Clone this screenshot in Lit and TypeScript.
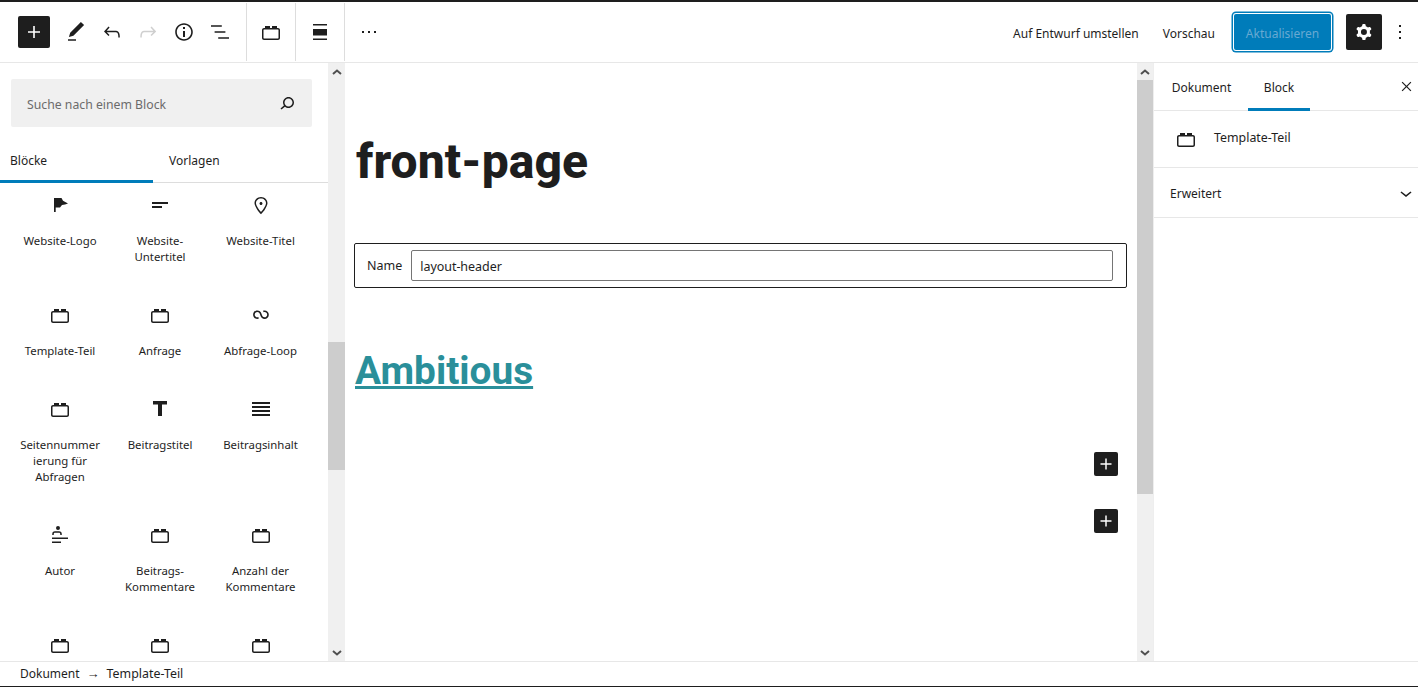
import { LitElement, html, css, svg } from "lit";
import { customElement } from "lit/decorators.js";

const P: Record<string, string> = {
  plus: "M18 11.2h-5.2V6h-1.6v5.2H6v1.6h5.2V18h1.6v-5.2H18z",
  pencil: "M20.1 5.1L16.9 2 6.2 12.7l-1.3 4.4 4.5-1.3L20.1 5.1zM4 20.8h8v-1.5H4v1.5z",
  undo: "M18.3 11.7c-.6-.6-1.4-.9-2.3-.9H6.7l2.9-3.3-1.1-1-4.5 5L8.5 16l1-1-2.7-2.7H16c.5 0 .9.2 1.3.5 1 1 1 3.4 1 4.5v.3h1.5v-.2c0-1.5 0-4.3-1.5-5.7z",
  redo: "M15.6 6.5l-1.1 1 2.9 3.3H8c-.9 0-1.7.3-2.3.9-1.4 1.5-1.4 4.2-1.4 5.6v.2h1.5v-.3c0-1.1 0-3.5 1-4.5.3-.3.7-.5 1.3-.5h9.2L14.5 15l1.1 1.1 4.6-4.6-4.6-5z",
  info: "M12 3.2c-4.8 0-8.8 3.9-8.8 8.8 0 4.8 3.9 8.8 8.8 8.8 4.8 0 8.8-3.9 8.8-8.8 0-4.8-4-8.8-8.8-8.8zm0 16c-4 0-7.2-3.3-7.2-7.2C4.8 8 8 4.8 12 4.8s7.2 3.3 7.2 7.2c0 4-3.2 7.2-7.2 7.2zM11 17h2v-6h-2v6zm0-8h2V7h-2v2z",
  list: "M13.8 5.2H3v1.5h10.8V5.2zm-3.6 12v1.5H21v-1.5H10.2zm7.2-6H6.6v1.5h10.8v-1.5z",
  block: "M19 8h-1V6h-5v2h-2V6H6v2H5c-1.1 0-2 .9-2 2v8c0 1.1.9 2 2 2h14c1.1 0 2-.9 2-2v-8c0-1.1-.9-2-2-2zm.5 10c0 .3-.2.5-.5.5H5c-.3 0-.5-.2-.5-.5v-8c0-.3.2-.5.5-.5h14c.3 0 .5.2.5.5v8z",
  wide: "M5 5.5h14V4H5zM5 20h14v-1.5H5zM5 9h14v6.5H5z",
  dots: "M11 13h2v-2h-2v2zm-6 0h2v-2H5v2zm12-2v2h2v-2h-2z",
  vdots: "M13 19h-2v-2h2v2zm0-6h-2v-2h2v2zm0-6h-2V5h2v2z",
  cog: "M10.289 4.836A1 1 0 0111.275 4h1.306a1 1 0 01.987.836l.244 1.466c.787.26 1.503.679 2.108 1.218l1.393-.522a1 1 0 011.216.437l.653 1.13a1 1 0 01-.23 1.273l-1.148.944a6.025 6.025 0 010 2.435l1.149.946a1 1 0 01.23 1.272l-.653 1.13a1 1 0 01-1.216.437l-1.394-.522c-.605.54-1.32.958-2.108 1.218l-.244 1.466a1 1 0 01-.987.836h-1.306a1 1 0 01-.986-.836l-.244-1.466a5.995 5.995 0 01-2.108-1.218l-1.394.522a1 1 0 01-1.217-.436l-.653-1.131a1 1 0 01.23-1.272l1.149-.946a6.026 6.026 0 010-2.435l-1.148-.944a1 1 0 01-.23-1.272l.653-1.131a1 1 0 011.217-.437l1.393.522a5.994 5.994 0 012.108-1.218l.244-1.466zM14.929 12a3 3 0 11-6 0 3 3 0 016 0z",
  search: "M13.5 6C10.5 6 8 8.5 8 11.5c0 1.1.3 2.1.9 3l-3.4 3 1 1.1 3.4-2.9c1 .9 2.2 1.4 3.6 1.4 3 0 5.5-2.5 5.5-5.5C19 8.5 16.5 6 13.5 6zm0 9.5c-2.2 0-4-1.8-4-4s1.8-4 4-4 4 1.8 4 4-1.8 4-4 4z",
  close: "M6.4 5.2L12 10.8l5.6-5.6 1.2 1.2L13.2 12l5.6 5.6-1.2 1.2L12 13.2l-5.6 5.6-1.2-1.2 5.6-5.6-5.6-5.6z",
  chevron: "M17.5 11.6L12 16l-5.5-4.4.9-1.2L12 14l4.5-3.6 1 1.2z",
  flag: "M6 5h1.7v14H6zM7.7 5h5.8l1.5 2.8 5 2.7-3 1-3 .6-2 2.4H7.7z",
  tagline: "M4 11h16V9H4v2zM4 15h10v-2H4v2z",
  pin: "M12 9c-.8 0-1.5.7-1.5 1.5S11.2 12 12 12s1.5-.7 1.5-1.5S12.8 9 12 9zm0-5c-3.6 0-6.5 2.8-6.5 6.2 0 .8.3 1.8.9 3.1.5 1.1 1.2 2.3 2 3.6.7 1 3 3.8 3.2 3.9l.4.5.4-.5c.2-.2 2.6-2.9 3.2-3.9.8-1.2 1.5-2.5 2-3.6.6-1.3.9-2.3.9-3.1C18.5 6.8 15.6 4 12 4zm4.3 8.7c-.5 1-1.1 2.2-1.9 3.4-.5.7-1.7 2.2-2.4 3-.7-.8-1.9-2.3-2.4-3-.8-1.2-1.4-2.3-1.9-3.3-.6-1.4-.7-2.2-.7-2.5 0-2.6 2.2-4.7 5-4.7s5 2.1 5 4.7c0 .2-.1 1-.7 2.4z",
  loop: "M18.1823 11.6392C18.1823 13.0804 17.0139 14.2487 15.5727 14.2487C14.3579 14.2487 13.335 13.4179 13.0453 12.2922L13.0377 12.2625L13.0278 12.2335L12.3985 10.377L12.3942 10.3785C11.8571 8.64997 10.246 7.39405 8.33961 7.39405C5.99509 7.39405 4.09448 9.29465 4.09448 11.6392C4.09448 13.9837 5.99509 15.8843 8.33961 15.8843C8.88499 15.8843 9.40822 15.781 9.88943 15.5923L9.29212 14.0697C8.99812 14.185 8.67729 14.2487 8.33961 14.2487C6.89838 14.2487 5.73003 13.0804 5.73003 11.6392C5.73003 10.1979 6.89838 9.02959 8.33961 9.02959C9.55444 9.02959 10.5773 9.86046 10.867 10.9862L10.8772 10.9836L11.4695 12.7311C11.9515 14.546 13.6048 15.8843 15.5727 15.8843C17.9172 15.8843 19.8178 13.9837 19.8178 11.6392C19.8178 9.29465 17.9172 7.39404 15.5727 7.39404C15.0287 7.39404 14.5066 7.4968 14.0264 7.6847L14.6223 9.20781C14.9158 9.093 15.2358 9.02959 15.5727 9.02959C17.0139 9.02959 18.1823 10.1979 18.1823 11.6392Z",
  title: "M5 4v3.5h5V19h4V7.5h5V4z",
  content: "M3 5h18v2H3zM3 9h18v2H3zM3 13h18v2H3zM3 17h18v2H3z",
  author: "M12 5a2 2 0 11-4 0 2 2 0 014 0zM13.75 12v-1A2.75 2.75 0 0011 8.25H7A2.75 2.75 0 004.25 11v1h1.5v-1c0-.69.56-1.25 1.25-1.25h4c.69 0 1.25.56 1.25 1.25v1h1.5zM4 20h9v-1.5H4V20zm16-4H4v-1.5h16V16z",
};

const icon = (name: string, cls = "") =>
  html`<svg class="ic ${cls}" viewBox="0 0 24 24" width="24" height="24" fill="currentColor" fill-rule="evenodd">${svg`<path d=${P[name]}></path>`}</svg>`;

const BLOCKS: { i: string; l: string[]; r: string }[] = [
  { i: "flag", l: ["Website-Logo"], r: "two" },
  { i: "tagline", l: ["Website-", "Untertitel"], r: "two" },
  { i: "pin", l: ["Website-Titel"], r: "two" },
  { i: "block", l: ["Template-Teil"], r: "one" },
  { i: "block", l: ["Anfrage"], r: "one" },
  { i: "loop", l: ["Abfrage-Loop"], r: "one" },
  { i: "block", l: ["Seitennummer", "ierung für", "Abfragen"], r: "three" },
  { i: "title", l: ["Beitragstitel"], r: "three" },
  { i: "content", l: ["Beitragsinhalt"], r: "three" },
  { i: "author", l: ["Autor"], r: "two" },
  { i: "block", l: ["Beitrags-", "Kommentare"], r: "two" },
  { i: "block", l: ["Anzahl der", "Kommentare"], r: "two" },
  { i: "block", l: [""], r: "two" },
  { i: "block", l: [""], r: "two" },
  { i: "block", l: [""], r: "two" },
];

const up = html`<div class="sb-btn"><svg viewBox="0 0 10 6" width="10" height="6"><path d="M1 5l4-3.5L9 5" fill="none" stroke="#505050" stroke-width="2"></path></svg></div>`;
const down = html`<div class="sb-btn"><svg viewBox="0 0 10 6" width="10" height="6"><path d="M1 1l4 3.5L9 1" fill="none" stroke="#505050" stroke-width="2"></path></svg></div>`;

@customElement("app-root")
export class AppRoot extends LitElement {
  static styles = css`
    :host {
      display: flex;
      flex-direction: column;
      width: 1418px;
      height: 687px;
      overflow: hidden;
      background: #fff;
      color: #1e1e1e;
      font: 12px/16px "Noto Sans", sans-serif;
      border-top: 2px solid #1e1e1e;
      border-bottom: 1px solid #1e1e1e;
      box-sizing: border-box;
    }
    .ic { display: block; flex: none; }
    .top {
      height: 61px;
      flex: none;
      display: flex;
      align-items: center;
      border-bottom: 1px solid #e7e7e7;
      box-sizing: border-box;
    }
    .top-left { display: flex; align-items: center; height: 100%; padding-left: 18px; }
    .add {
      width: 32px; height: 32px; background: #1e1e1e; color: #fff; border-radius: 2px;
      display: flex; align-items: center; justify-content: center; margin-right: 8px;
    }
    .tool { width: 36px; height: 36px; display: flex; align-items: center; justify-content: center; }
    .tool.off { color: #cfcfcf; }
    .tools { display: flex; align-items: center; margin-right: 8px; }
    .group {
      height: 58px; width: 49px; border-left: 1px solid #ddd; box-sizing: border-box;
      display: flex; align-items: center; justify-content: center;
    }
    .top-right { margin-left: auto; display: flex; align-items: center; height: 100%; }
    .link { margin-right: 24px; padding-top: 3px; }
    .link.last { margin-right: 18px; }
    .save {
      width: 99px; height: 38px; margin-right: 14px; background: #007cba; color: #67a9d2;
      border-radius: 3px; display: flex; align-items: center; justify-content: center;
      box-shadow: inset 0 0 0 1px #fff, 0 0 0 1.5px #007cba; padding-top: 3px; box-sizing: border-box;
    }
    .cog {
      width: 36px; height: 36px; background: #1e1e1e; color: #fff; border-radius: 2px;
      display: flex; align-items: center; justify-content: center;
    }
    .vd { width: 36px; display: flex; justify-content: center; }
    .main { flex: 1; display: flex; min-height: 0; }

    .inserter { width: 328px; flex: none; display: flex; flex-direction: column; min-height: 0; }
    .search {
      margin: 16px 16px 0 11px; height: 48px; background: #f0f0f0; border-radius: 2px; flex: none;
      display: flex; align-items: center; justify-content: space-between;
      padding: 0 13px 0 16px; color: #6b6b6b; font-size: 12.25px;
    }
    .search span { padding-top: 3px; }
    .search .ic { color: #1e1e1e; }
    .itabs { display: flex; height: 56px; flex: none; border-bottom: 1px solid #ddd; box-sizing: border-box; }
    .itab { width: 153px; box-sizing: border-box; display: flex; align-items: center; padding: 12px 0 0 10px; }
    .itab.on { border-bottom: 3px solid #007cba; margin-bottom: -1px; padding-top: 15px; }
    .itab.second { padding-left: 16px; }
    .blocks {
      flex: 1; min-height: 0; overflow: hidden;
      display: grid; grid-template-columns: 100px 100px 101px; padding: 10px 0 0 10px; align-content: start;
    }
    .b { display: flex; flex-direction: column; align-items: center; text-align: center; font-size: 11.4px; }
    .b.one { height: 94px; }
    .b.two { height: 110px; }
    .b.three { height: 126px; }
    .b .lb { margin-top: 16px; height: 16px; white-space: nowrap; }
    .b .lb + .lb { margin-top: 0; }

    .sb { width: 17px; flex: none; background: #f0f0f0; display: flex; flex-direction: column; }
    .sb.c { width: 16px; }
    .sb-btn { height: 17px; flex: none; display: flex; align-items: center; justify-content: center; }
    .gap-l { height: 262px; flex: none; }
    .thumb { background: #cdcdcd; flex: none; }
    .thumb.l { height: 128px; }
    .thumb.r { height: 414px; }
    .fill { flex: 1; }

    .canvas { flex: 1; min-width: 0; display: flex; flex-direction: column; padding: 0 10px 0 9px; }
    .h1 {
      margin: 68px 0 0 2px; font: 800 48px/62px "Roboto", sans-serif; letter-spacing: 0.1px; color: #1e1e1e;
    }
    .tp {
      margin-top: 50px; height: 45px; border: 1px solid #1e1e1e; border-radius: 2px; box-sizing: border-box;
      display: flex; align-items: center; padding: 0 13px 0 12px; gap: 9px; font-size: 12.5px;
    }
    .tp span { padding-top: 1px; }
    .input {
      flex: 1; height: 31px; border: 1px solid #757575; border-radius: 2px; box-sizing: border-box;
      display: flex; align-items: center; padding: 2px 0 0 8px; letter-spacing: -0.05px;
    }
    .site {
      margin: 56px 0 0 1px; font: 700 38.8px/54px "Roboto", sans-serif; color: #2a8f9a; text-decoration: underline;
      text-decoration-thickness: 3px; align-self: flex-start;
    }
    .appender {
      width: 24px; height: 24px; background: #1e1e1e; color: #fff; border-radius: 2px; align-self: flex-end;
      margin-right: 9px; margin-top: 33px; display: flex; align-items: center; justify-content: center;
    }
    .appender.first { margin-top: 54px; }
    .appender .ic { width: 22px; height: 22px; }

    .side { width: 265px; flex: none; border-left: 1px solid #eee; box-sizing: border-box; display: flex; flex-direction: column; }
    .stabs { height: 48px; flex: none; display: flex; border-bottom: 1px solid #e7e7e7; box-sizing: border-box; }
    .stab { display: flex; align-items: center; justify-content: center; padding-top: 3px; box-sizing: border-box; }
    .stab.doc { width: 94px; padding-left: 1px; }
    .stab.blk { width: 62px; border-bottom: 3px solid #007cba; margin-bottom: -1px; padding-top: 5px; }
    .x { margin-left: auto; width: 24px; display: flex; align-items: center; }
    .x .ic { width: 17px; height: 17px; margin-left: 3.5px; }
    .card {
      height: 57px; flex: none; border-bottom: 1px solid #e7e7e7; box-sizing: border-box;
      display: flex; padding: 16px 0 0 20px; gap: 16px; font-size: 12.4px;
    }
    .card span { margin-top: 3px; }
    .adv {
      height: 50px; flex: none; border-bottom: 1px solid #e7e7e7; box-sizing: border-box;
      display: flex; align-items: center; justify-content: space-between; padding: 0 0 0 16px;
    }
    .adv span { padding-top: 2px; }
    .crumb {
      height: 25px; flex: none; border-top: 1px solid #e7e7e7; box-sizing: border-box;
      display: flex; align-items: center; padding-left: 20px; gap: 7px;
    }
    .crumb .t { font-size: 12.4px; }
    .crumb .a { font-family: "Liberation Sans", sans-serif; font-size: 13px; }
  `;

  render() {
    return html`
      <div class="top">
        <div class="top-left">
          <div class="add">${icon("plus")}</div>
          <div class="tools">
            <div class="tool">${icon("pencil")}</div>
            <div class="tool">${icon("undo")}</div>
            <div class="tool off">${icon("redo")}</div>
            <div class="tool">${icon("info")}</div>
            <div class="tool">${icon("list")}</div>
          </div>
          <div class="group">${icon("block")}</div>
          <div class="group">${icon("wide")}</div>
          <div class="group">${icon("dots")}</div>
        </div>
        <div class="top-right">
          <span class="link">Auf Entwurf umstellen</span>
          <span class="link last">Vorschau</span>
          <div class="save">Aktualisieren</div>
          <div class="cog">${icon("cog")}</div>
          <div class="vd">${icon("vdots")}</div>
        </div>
      </div>
      <div class="main">
        <div class="inserter">
          <div class="search"><span>Suche nach einem Block</span>${icon("search")}</div>
          <div class="itabs">
            <div class="itab on">Blöcke</div>
            <div class="itab second">Vorlagen</div>
          </div>
          <div class="blocks">
            ${BLOCKS.map(
              (b) => html`<div class="b ${b.r}">${icon(b.i)}${b.l.map((t) => html`<div class="lb">${t}</div>`)}</div>`
            )}
          </div>
        </div>
        <div class="sb">${up}<div class="gap-l"></div><div class="thumb l"></div><div class="fill"></div>${down}</div>
        <div class="canvas">
          <div class="h1">front-page</div>
          <div class="tp"><span>Name</span><div class="input">layout-header</div></div>
          <div class="site">Ambitious</div>
          <div class="appender first">${icon("plus")}</div>
          <div class="appender">${icon("plus")}</div>
        </div>
        <div class="sb c">${up}<div class="thumb r"></div><div class="fill"></div>${down}</div>
        <div class="side">
          <div class="stabs">
            <div class="stab doc">Dokument</div>
            <div class="stab blk">Block</div>
            <div class="x">${icon("close")}</div>
          </div>
          <div class="card">${icon("block")}<span>Template-Teil</span></div>
          <div class="adv"><span>Erweitert</span>${icon("chevron")}</div>
        </div>
      </div>
      <div class="crumb"><span>Dokument</span><span class="a">→</span><span class="t">Template-Teil</span></div>
    `;
  }
}
